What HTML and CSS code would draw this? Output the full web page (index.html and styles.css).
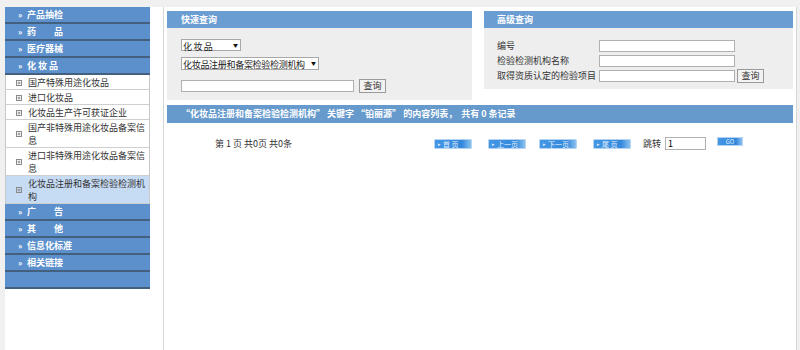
FILE: index.html
```html
<!DOCTYPE html>
<html>
<head>
  <meta charset="UTF-8">
  <title>数据查询</title>
  <link rel="stylesheet" href="styles.css">
</head>
<body>
  <div class="page">
    <div class="sidebar">
      <div class="nav-head"><span class="raquo">»</span>产品抽检</div>
      <div class="nav-head"><span class="raquo">»</span>药　　品</div>
      <div class="nav-head"><span class="raquo">»</span>医疗器械</div>
      <div class="nav-head"><span class="raquo">»</span>化 妆 品</div>
      <ul class="nav-sub">
        <li><svg class="plus" width="6" height="6" viewBox="0 0 6 6"><rect x="0.5" y="0.5" width="5" height="5" fill="none" stroke="#8a8a8a"/><path d="M1.5 3H4.5M3 1.5V4.5" stroke="#8a8a8a"/></svg><span>国产特殊用途化妆品</span></li>
        <li><svg class="plus" width="6" height="6" viewBox="0 0 6 6"><rect x="0.5" y="0.5" width="5" height="5" fill="none" stroke="#8a8a8a"/><path d="M1.5 3H4.5M3 1.5V4.5" stroke="#8a8a8a"/></svg><span>进口化妆品</span></li>
        <li><svg class="plus" width="6" height="6" viewBox="0 0 6 6"><rect x="0.5" y="0.5" width="5" height="5" fill="none" stroke="#8a8a8a"/><path d="M1.5 3H4.5M3 1.5V4.5" stroke="#8a8a8a"/></svg><span>化妆品生产许可获证企业</span></li>
        <li><svg class="plus" width="6" height="6" viewBox="0 0 6 6"><rect x="0.5" y="0.5" width="5" height="5" fill="none" stroke="#8a8a8a"/><path d="M1.5 3H4.5M3 1.5V4.5" stroke="#8a8a8a"/></svg><span>国产非特殊用途化妆品备案信息</span></li>
        <li><svg class="plus" width="6" height="6" viewBox="0 0 6 6"><rect x="0.5" y="0.5" width="5" height="5" fill="none" stroke="#8a8a8a"/><path d="M1.5 3H4.5M3 1.5V4.5" stroke="#8a8a8a"/></svg><span>进口非特殊用途化妆品备案信息</span></li>
        <li class="active"><svg class="plus" width="6" height="6" viewBox="0 0 6 6"><rect x="0.5" y="0.5" width="5" height="5" fill="none" stroke="#8a8a8a"/><path d="M1.5 3H4.5M3 1.5V4.5" stroke="#8a8a8a"/></svg><span>化妆品注册和备案检验检测机构</span></li>
      </ul>
      <div class="nav-head"><span class="raquo">»</span>广　　告</div>
      <div class="nav-head"><span class="raquo">»</span>其　　他</div>
      <div class="nav-head"><span class="raquo">»</span>信息化标准</div>
      <div class="nav-head"><span class="raquo">»</span>相关链接</div>
      <div class="nav-head"></div>
    </div>

    <div class="main">
      <div class="search-row">
        <div class="panel quick">
          <div class="panel-title">快速查询</div>
          <div class="panel-body">
            <div class="select-wrap small">
              <select><option>化 妆 品</option></select>
            </div>
            <div class="select-wrap wide">
              <select><option>化妆品注册和备案检验检测机构</option></select>
            </div>
            <div class="input-row">
              <input type="text" class="keyword">
              <button class="query-btn">查询</button>
            </div>
          </div>
        </div>

        <div class="panel advanced">
          <div class="panel-title">高级查询</div>
          <div class="panel-body">
            <div class="field">
              <label>编号</label>
              <input type="text">
            </div>
            <div class="field">
              <label>检验检测机构名称</label>
              <input type="text">
            </div>
            <div class="field">
              <label>取得资质认定的检验项目</label>
              <input type="text">
              <button class="query-btn">查询</button>
            </div>
          </div>
        </div>
      </div>

      <div class="result-bar">“化妆品注册和备案检验检测机构” 关键字 “铂丽源” 的内容列表， &nbsp;共有 0 条记录</div>

      <div class="pager">
        <span class="pager-info">第 1 页 共0页 共0条</span>
        <span class="page-btn"><i>▸</i>首 页</span>
        <span class="page-btn gap-s"><i>▸</i>上一页</span>
        <span class="page-btn"><i>▸</i>下一页</span>
        <span class="page-btn"><i>▸</i>尾 页</span>
        <span class="jump">跳转</span>
        <input type="text" class="jump-input" value="1">
        <span class="go-btn">GO</span>
      </div>
    </div>
  </div>
</body>
</html>
```

FILE: styles.css
```css
body {
  margin: 0;
  padding: 7px 3px 0 5px;
  background-color: #f0f0f0;
  font-family: "Noto Sans CJK SC", "Noto Sans", sans-serif;
  font-size: 9px;
  color: #333;
}

.page {
  display: flex;
  background-color: #fff;
  min-height: 343px;
}

/* Menu de gauche */
.sidebar {
  width: 145px;
  flex-shrink: 0;
}

.nav-head {
  height: 15px;
  line-height: 15px;
  padding-left: 13px;
  background-color: #5b90cc;
  border-bottom: 2px solid #43607f;
  color: #fff;
  font-weight: bold;
}

.raquo {
  display: inline-block;
  width: 9px;
  font-size: 8px;
}

.nav-sub {
  list-style: none;
  margin: 0;
  padding: 0;
  border-left: 1px solid #c8c8c8;
  border-right: 1px solid #c8c8c8;
}

.nav-sub li {
  display: flex;
  align-items: center;
  padding: 1px 4px 0 10px;
  line-height: 13px;
  border-bottom: 1px solid #cfcfcf;
  color: #333;
}

.nav-sub li.active {
  background-color: #c6dbf4;
}

.plus {
  flex-shrink: 0;
  margin-right: 6px;
}

/* Zone principale */
.main {
  flex: 1;
  margin-left: 13px;
  border-left: 1px solid #d6d6d6;
  border-right: 1px solid #d6d6d6;
  padding: 4px 3px 0 3px;
}

.search-row {
  display: flex;
  align-items: flex-start;
  gap: 12px;
}

.panel {
  background-color: #eeeeee;
}

.panel.quick {
  width: 305px;
}

.panel.advanced {
  flex: 1;
}

.panel-title {
  height: 17px;
  line-height: 17px;
  background-color: #6a9dd2;
  color: #fff;
  font-weight: bold;
}

.quick .panel-title {
  padding-left: 14px;
}

.advanced .panel-title {
  padding-left: 13px;
}

.quick .panel-body {
  padding: 11px 14px 7px;
}

.advanced .panel-body {
  padding: 10px 13px 6px;
}

.select-wrap {
  position: relative;
  background-color: #fff;
  border: 1px solid #a8a8a8;
  box-sizing: border-box;
}

.select-wrap.small {
  width: 60px;
  height: 12px;
  margin-bottom: 6px;
}

.select-wrap.wide {
  width: 138px;
  height: 13px;
  margin-bottom: 9px;
}

.select-wrap select {
  -webkit-appearance: none;
  appearance: none;
  border: none;
  background: transparent;
  width: 100%;
  height: 100%;
  padding: 0 0 0 1px;
  font-family: inherit;
  font-size: 9px;
  line-height: 10px;
  letter-spacing: -0.3px;
  color: #222;
  outline: none;
}

.select-wrap::after {
  content: "▼";
  position: absolute;
  right: 2px;
  top: 0;
  font-size: 5px;
  line-height: 10px;
  color: #111;
}

.input-row {
  display: flex;
  align-items: center;
  gap: 5px;
}

input[type="text"] {
  box-sizing: border-box;
  height: 12px;
  border: 1px solid #b0b0b0;
  background-color: #fff;
  padding: 0 2px;
  font-family: inherit;
  font-size: 9px;
  outline: none;
}

.keyword {
  width: 173px;
}

.query-btn {
  box-sizing: border-box;
  width: 27px;
  height: 14px;
  padding: 0;
  border: 1px solid #9a9a9a;
  background-color: #f2f2f2;
  font-family: inherit;
  font-size: 9px;
  line-height: 12px;
  color: #333;
}

.field {
  display: flex;
  align-items: center;
  height: 15px;
}

.field label {
  width: 102px;
  flex-shrink: 0;
}

.field input {
  width: 136px;
}

.field .query-btn {
  margin-left: 2px;
}

/* Barre de resultats */
.result-bar {
  margin-top: 5px;
  height: 18px;
  line-height: 18px;
  padding-left: 14px;
  background-color: #6699cc;
  color: #fff;
  font-weight: bold;
}

/* Pagination */
.pager {
  display: flex;
  align-items: center;
  margin-top: 14px;
  height: 13px;
  padding-left: 48px;
}

.pager-info {
  width: 219px;
}

.page-btn {
  box-sizing: border-box;
  width: 38px;
  height: 10px;
  margin-right: 16px;
  border: 1px solid #b4d4f2;
  border-radius: 1px;
  background: linear-gradient(to right, #4597e4, #3288db 75%, #8cc1ef);
  color: #e4f0ff;
  font-size: 7px;
  line-height: 8px;
  padding-left: 3px;
  white-space: nowrap;
}

.page-btn i {
  font-style: normal;
  font-size: 5px;
  margin-right: 2px;
  vertical-align: 1px;
}

.page-btn.gap-s {
  margin-right: 13px;
}

.jump {
  margin-left: -4px;
  width: 22px;
}

.jump-input {
  width: 41px;
  height: 13px !important;
}

.go-btn {
  box-sizing: border-box;
  width: 26px;
  height: 9px;
  margin-left: 11px;
  margin-top: -4px;
  border: 1px solid #b4d4f2;
  background: linear-gradient(to right, #4597e4, #3288db 75%, #8cc1ef);
  color: #e4f0ff;
  font-size: 6px;
  line-height: 7px;
  text-align: center;
}
```
